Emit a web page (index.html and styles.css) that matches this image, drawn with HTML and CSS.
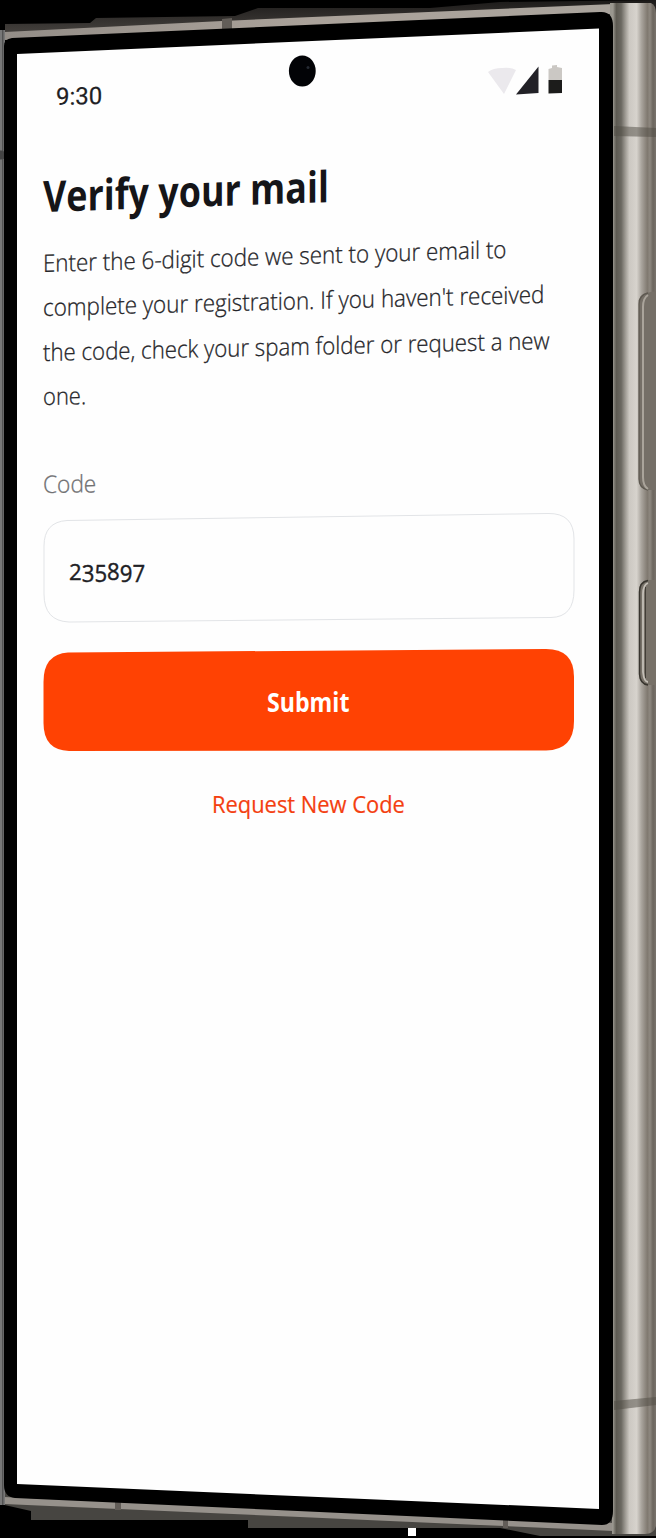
FILE: index.html
```
<!DOCTYPE html>
<html lang="en">
<head>
<meta charset="utf-8">
<title>Verify your mail</title>
<link rel="stylesheet" href="styles.css">
</head>
<body>
<main class="phone">
  <svg class="device" viewBox="0 0 656 1538" aria-hidden="true">
    <defs>
      <linearGradient id="side" gradientUnits="userSpaceOnUse" x1="613" y1="0" x2="656" y2="0">
        <stop offset="0" stop-color="#9a978f"/><stop offset=".04" stop-color="#77746c"/>
        <stop offset=".08" stop-color="#5d5a52"/><stop offset=".19" stop-color="#6b6861"/>
        <stop offset=".3" stop-color="#a5a19a"/><stop offset=".38" stop-color="#ccc8c2"/>
        <stop offset=".55" stop-color="#d7d3cd"/><stop offset=".66" stop-color="#aaa59e"/>
        <stop offset=".8" stop-color="#807970"/><stop offset=".86" stop-color="#8e8880"/>
        <stop offset=".93" stop-color="#6c665e"/><stop offset="1" stop-color="#79736c"/>
      </linearGradient>
      <linearGradient id="top" x1="0" x2="1" y1="0" y2="0">
        <stop offset="0" stop-color="#938d87"/><stop offset=".5" stop-color="#aaa29a"/><stop offset="1" stop-color="#aaa49d"/>
      </linearGradient>
      <linearGradient id="upper" x1="0" x2="0" y1="0" y2="1">
        <stop offset="0" stop-color="#1c1a19"/><stop offset="1" stop-color="#4c4844"/>
      </linearGradient>
    </defs>
    <rect width="656" height="1538" fill="#000"/>
    <path d="M90 23L96 18L235 16L258 8L430 8L500 2L656 0V14L5 39V24Z" fill="url(#upper)"/>
    <path d="M5 32L222 21L614 4V14L5 40Z" fill="url(#top)"/>
    <path d="M0 1504L31 1511V1520H248V1528H500L540 1536H656V1500L0 1490Z" fill="#474541"/>
    <path d="M4 1497L614 1523V1531L300 1517L4 1504Z" fill="#96918b"/>
    <path d="M610 3H651Q656 5 656 14V1526Q654 1534 645 1534H612Z" fill="url(#side)"/>
    <path d="M0 30H5V1505H0Z" fill="#777"/><path d="M2.800 30V1505" stroke="#444"/>
    <path d="M222 19L232 18V29L222 30ZM115 1502H121V1510H115ZM503 1519H508V1528H503Z" fill="#625d58"/>
    <circle cx="1" cy="155" r="4.500" fill="#444"/>
    <path d="M4 46Q4 39 12 38L600 12Q613 11 613 26V1511Q613 1525 602 1525L15 1498Q4 1497 4 1485Z" fill="#000"/>
    <path d="M614 126L656 128V137L614 136ZM614 1401L656 1397V1405L614 1410Z" fill="#504c44" opacity=".5"/>
    <path d="M656 291L646 293Q639 295 639 303V480Q639 488 647 490L656 490Z" fill="#756f67"/>
    <path d="M648 293Q639 295 639 304V479Q639 488 648 490" fill="none" stroke="#5d5850" stroke-width="1.300"/>
    <path d="M648 295Q643 298 643 307V477Q643 486 648 489" fill="none" stroke="#aaa49b" stroke-width="2"/>
    <path d="M656 580H649Q639 580 639 592V673Q639 685 649 685H656Z" fill="#777168"/>
    <path d="M648 580.500Q639.500 582 639.500 592V674Q640 684 648 685" fill="none" stroke="#37342e" stroke-width="1.500"/>
    <path d="M648 583Q643 585 643 594V672Q644 682 648 682" fill="none" stroke="#c4bfb7" stroke-width="1.800"/>
    <path d="M645.500 587V678" stroke="#423e37"/>
    <path d="M17 54L599 28.500V1509L17 1484Z" fill="#fefefe"/>
    <ellipse cx="302.300" cy="71" rx="13.400" ry="15.600" fill="#020306"/>
    <circle cx="308" cy="67.500" r="1.500" fill="#252a32"/>
    <path d="M408 1528H416V1536H408Z" fill="#fff"/>
  </svg>
  <section class="screen">
    <header class="status">
      <span class="time"><span class="fit">9:30</span></span>
      <svg class="signals" viewBox="0 0 76 34" aria-hidden="true">
        <path d="M-2 9Q3 5 12 5Q21 4 26 7L14 31Z" fill="#ebe9ed"/>
        <path d="M26 31.500L48.500 3.500V30Z" fill="#222127"/>
        <path d="M58.500 6L62 5V2.500L67 2V4L72 5V17H58.500Z" fill="#cbc8c4"/><path d="M58.500 17H72V30L58.500 30.500Z" fill="#1c1c1b"/>
      </svg>
    </header>
    <h1 class="title"><span class="fit">Verify your mail</span></h1>
    <p class="copy">
      <span class="line one"><span class="fit">Enter the 6-digit code we sent to your email to</span></span>
      <span class="line two"><span class="fit">complete your registration. If you haven't received</span></span>
      <span class="line three"><span class="fit">the code, check your spam folder or request a new</span></span>
      <span class="line four"><span class="fit">one.</span></span>
    </p>
    <div class="label"><span class="fit">Code</span></div>
    <div class="field">
      <svg class="shape" viewBox="0 0 532 112" aria-hidden="true"><path d="M24 7.500L505 0.500Q531 0 531 26V77Q531 104 508 104.500L26 109Q1 108 1 81V33Q1 9 24 7.500Z" fill="#fefefe" stroke="#e2e4e7"/></svg>
      <span class="value"><span class="fit"><i class="low">2</i><i class="drop low">3</i><i class="drop low">5</i><i>8</i><i class="drop">9</i><i class="drop">7</i></span></span>
    </div>
    <div class="button">
      <svg class="shape" viewBox="0 0 532 104" aria-hidden="true"><path d="M25 3.500L503 0Q531 0 531 28V72Q531 101 503 101.500L26 102Q0.500 101 0.500 74V33Q0.500 5 25 3.500Z" fill="#ff4203"/></svg>
      <span class="submit"><span class="fit">Submit</span></span>
    </div>
    <div class="resend"><span class="fit">Request New Code</span></div>
  </section>
</main>
</body>
</html>
```
FILE: styles.css
```
* { box-sizing: border-box; }
body { margin: 0; background: #000; font-family: "Open Sans", sans-serif; }
.phone { position: relative; width: 656px; height: 1538px; overflow: hidden; }
.device { position: absolute; inset: 0; width: 656px; height: 1538px; }
.screen { position: relative; padding: 63px 0 0 43px; width: 599px; color: #202024; }
.fit { display: inline-block; white-space: nowrap; transform-origin: 0 50%; }
.status { display: flex; justify-content: space-between; height: 103px; padding: 0 33px 0 13px; }
.time { font: 400 24px/68px Roboto, sans-serif; }
.time .fit { transform: skewY(-1.5deg); -webkit-text-stroke: 0.2px; }
.signals { width: 76px; height: 34px; overflow: visible; }
.title { margin: 0; font-size: 43px; line-height: 60px; font-weight: 700; height: 74px; color: #151518; }
.title .fit { transform: skewY(-2deg) scaleX(0.834); }
.copy { margin: 0; font-size: 24px; font-weight: 300; height: 229px; color: #252529; -webkit-text-stroke: 0.3px; }
.line { display: block; height: 44.3px; line-height: 46px; }
.one .fit { transform: skewY(-1.75deg) scaleX(0.932); }
.two .fit { transform: skewY(-1.5deg) scaleX(0.933); }
.three .fit { transform: skewY(-1.35deg) scaleX(0.926); }
.four .fit { transform: skewY(-1deg) scaleX(0.915); }
.label { font-size: 24px; line-height: 29px; height: 44px; font-weight: 300; color: #707072; -webkit-text-stroke: 0.3px; }
.label .fit { transform: skewY(-0.8deg) scaleX(0.945); }
.field, .button { display: grid; width: 532px; }
.field > *, .button > * { grid-area: 1 / 1; }
.field { height: 136px; }
.shape { width: 532px; }
.value { padding: 43px 26px; font-size: 24px; line-height: 30px; -webkit-text-stroke: 0.4px; }
.value .fit { transform: scaleX(0.925); }
.value i { font-style: normal; display: inline-block; }
.value .low { transform: scaleY(0.92); transform-origin: 0 80%; }
.value .drop { transform: translateY(2px); }
.value .drop.low { transform: translateY(2px) scaleY(0.95); }
.button { height: 104px; }
.submit { font-size: 26px; font-weight: 700; line-height: 106px; padding-left: 224px; color: #fff; }
.submit .fit { transform: scaleX(0.89); }
.resend { font-size: 24px; line-height: 36px; padding: 33px 0 0 169px; color: #f43f10; -webkit-text-stroke: 0.2px; }
.resend .fit { transform: scaleX(0.912); }
```
